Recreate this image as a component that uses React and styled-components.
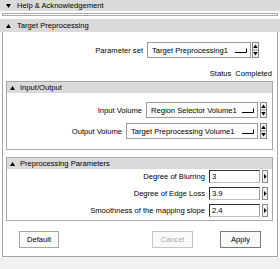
import React from "react";
import styled, { createGlobalStyle } from "styled-components";

const Global = createGlobalStyle`
  html, body { margin: 0; padding: 0; background: #fff; }
  body {
    font-family: "Liberation Sans", Arial, sans-serif;
    font-size: 7.6px;
    color: #000;
  }
`;

const Page = styled.div`
  width: 280px;
  height: 269px;
  display: flex;
  flex-direction: column;
  overflow: hidden;
  background: #fff;
`;

const SectionHeader = styled.div`
  display: flex;
  align-items: center;
  gap: ${(p) => p.$gap}px;
  height: ${(p) => p.$h}px;
  padding-left: ${(p) => p.$indent}px;
  margin-top: ${(p) => p.$mt || 0}px;
  background: #dadada;
  white-space: nowrap;
  flex-shrink: 0;
`;

const CollapsedBody = styled.div`
  margin: 2px 2px 0 2px;
  height: 1px;
  border: 1px solid #a8a8a8;
  flex-shrink: 0;
`;

const Panel = styled.div`
  margin: 0 2px;
  border: 1px solid #a4a4a4;
  border-top: none;
  padding: 10px 4px 8px 3px;
  display: flex;
  flex-direction: column;
  flex-shrink: 0;
`;

const FieldRow = styled.div`
  display: flex;
  align-items: center;
  justify-content: flex-end;
  height: ${(p) => p.$h}px;
  padding-right: ${(p) => p.$pr}px;
  margin-top: ${(p) => p.$mt || 0}px;
  white-space: nowrap;
`;

const Label = styled.span`
  margin-right: 4px;
`;

const SelectBox = styled.div`
  display: flex;
  align-items: center;
  justify-content: space-between;
  box-sizing: border-box;
  width: ${(p) => p.$w}px;
  height: 100%;
  padding: 0 3px 0 4px;
  border: 1px solid #9c9c9c;
  background: #fcfcfc;
  margin-right: ${(p) => p.$gap}px;
`;

const NumberBox = styled.div`
  display: flex;
  align-items: center;
  box-sizing: border-box;
  width: 51px;
  height: 100%;
  padding-left: 2px;
  border: 1px solid;
  border-color: #303030 #a0a0a0 #c0c0c0 #303030;
  background: #fff;
  margin-right: 2px;
`;

const StatusRow = styled.div`
  display: flex;
  justify-content: flex-end;
  align-items: center;
  gap: 4px;
  height: 10px;
  margin-top: 10px;
  padding-right: 1px;
`;

const SubSection = styled.div`
  display: flex;
  flex-direction: column;
  border: 1px solid #a8a8a8;
  margin-top: ${(p) => p.$mt}px;
`;

const SubBody = styled.div`
  display: flex;
  flex-direction: column;
  gap: ${(p) => p.$gap}px;
  padding: ${(p) => p.$pt}px 0 ${(p) => p.$pb}px 0;
`;

const ButtonRow = styled.div`
  display: flex;
  align-items: center;
  margin-top: 10px;
  padding: 0 12px 0 13px;
  height: 17px;
`;

const Spacer = styled.div`
  flex: 1;
`;

const Button = styled.div`
  display: flex;
  align-items: center;
  justify-content: center;
  box-sizing: border-box;
  width: ${(p) => p.$w}px;
  height: 17px;
  margin-left: ${(p) => p.$ml || 0}px;
  border: 1px solid ${(p) => (p.$disabled ? "#c6c6c6" : p.$strong ? "#7a7a7a" : "#a6a6a6")};
  background: #fafafa;
  color: ${(p) => (p.$disabled ? "#a8a8a8" : "#000")};
`;

const Footer = styled.div`
  flex: 1;
  background: #f1f1f1;
`;

const Svg = styled.svg`
  display: block;
  flex-shrink: 0;
`;

const Tri = ({ down }) => (
  <Svg width="5" height="4" viewBox="0 0 5 4">
    <polygon points={down ? "0,0 5,0 2.5,4" : "0,4 5,4 2.5,0"} fill="#000" />
  </Svg>
);

const OptionMark = () => (
  <Svg width="12" height="5" viewBox="0 0 12 5">
    <path d="M0 4.5 H11.5 V0.5" stroke="#000" strokeWidth="1" fill="none" />
  </Svg>
);

const Spinner = () => (
  <Svg width="7" height="16" viewBox="0 0 7 16">
    <rect x="0.5" y="0.5" width="6" height="15" fill="#f2f2f2" stroke="#8a8a8a" />
    <line x1="0" y1="8" x2="7" y2="8" stroke="#8a8a8a" />
    <polygon points="1.2,6 5.8,6 3.5,2.4" fill="#000" />
    <polygon points="1.2,10 5.8,10 3.5,13.6" fill="#000" />
  </Svg>
);

const ArrowBtn = () => (
  <Svg width="6" height="13" viewBox="0 0 6 13">
    <rect x="0.5" y="0.5" width="5" height="12" fill="#f2f2f2" stroke="#8a8a8a" />
    <polygon points="2,4 2,9 4.6,6.5" fill="#000" />
  </Svg>
);

const SelectField = ({ label, value, width, gap, pr, mt }) => (
  <FieldRow $h={16} $pr={pr} $mt={mt}>
    <Label>{label}</Label>
    <SelectBox $w={width} $gap={gap}>
      <span>{value}</span>
      <OptionMark />
    </SelectBox>
    <Spinner />
  </FieldRow>
);

const NumberField = ({ label, value }) => (
  <FieldRow $h={13} $pr={4}>
    <Label>{label}</Label>
    <NumberBox>{value}</NumberBox>
    <ArrowBtn />
  </FieldRow>
);

export default function App() {
  return (
    <>
      <Global />
      <Page>
        <SectionHeader $h={11} $indent={6} $gap={6}>
          <Tri down />
          <span>Help &amp; Acknowledgement</span>
        </SectionHeader>
        <CollapsedBody />
        <SectionHeader $h={13} $indent={6} $gap={6} $mt={3}>
          <Tri />
          <span>Target Preprocessing</span>
        </SectionHeader>
        <Panel>
          <SelectField label="Parameter set" value="Target Preprocessing1" width={104} gap={1} pr={14} />
          <StatusRow>
            <span>Status</span>
            <span>Completed</span>
          </StatusRow>
          <SubSection $mt={3}>
            <SectionHeader $h={11} $indent={3} $gap={5}>
              <Tri />
              <span>Input/Output</span>
            </SectionHeader>
            <SubBody $gap={5} $pt={9} $pb={10}>
              <SelectField label="Input Volume" value="Region Selector Volume1" width={112} gap={2} pr={5} />
              <SelectField label="Output Volume" value="Target Preprocessing Volume1" width={132} gap={2} pr={5} />
            </SubBody>
          </SubSection>
          <SubSection $mt={7}>
            <SectionHeader $h={11} $indent={3} $gap={5}>
              <Tri />
              <span>Preprocessing Parameters</span>
            </SectionHeader>
            <SubBody $gap={4} $pt={1} $pb={3}>
              <NumberField label="Degree of Blurring" value="3" />
              <NumberField label="Degree of Edge Loss" value="3.9" />
              <NumberField label="Smoothness of the mapping slope" value="2.4" />
            </SubBody>
          </SubSection>
          <ButtonRow>
            <Button $w={40}>Default</Button>
            <Spacer />
            <Button $w={41} $disabled>Cancel</Button>
            <Button $w={41} $ml={27} $strong>Apply</Button>
          </ButtonRow>
        </Panel>
        <Footer />
      </Page>
    </>
  );
}
